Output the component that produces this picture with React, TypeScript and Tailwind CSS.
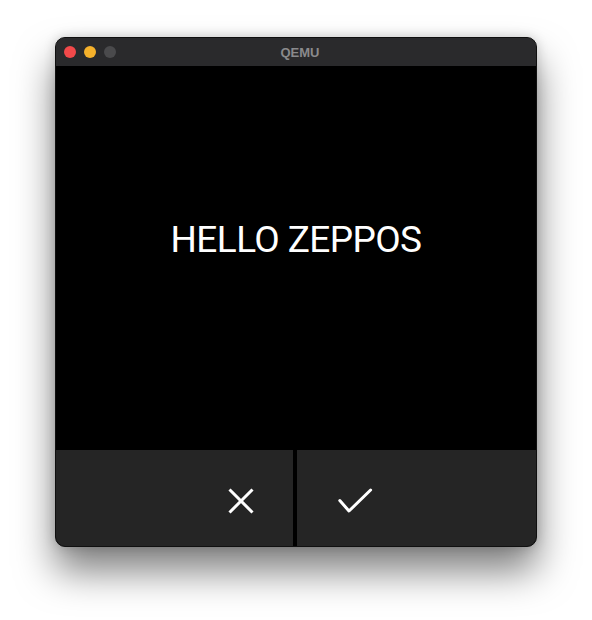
import React from "react";

export default function App() {
  return (
    <div className="w-[592px] h-[620px] bg-white pt-[37px] pl-[55px]" style={{ fontFamily: "Roboto, 'Liberation Sans', sans-serif" }}>
      <div className="w-[482px] rounded-[10px] overflow-hidden border border-[#101010] bg-[#2a2a2c] shadow-[0_24px_38px_rgba(0,0,0,0.5),0_0_12px_rgba(0,0,0,0.18)]">
        {/* Title bar */}
        <div className="h-[28px] flex items-center bg-[#2a2a2c]">
          <div className="flex-1 flex items-center gap-[8px] pl-[8px]">
            <span className="w-[12px] h-[12px] rounded-full bg-[#f2494a]" />
            <span className="w-[12px] h-[12px] rounded-full bg-[#f5b12b]" />
            <span className="w-[12px] h-[12px] rounded-full bg-[#4a4a4c]" />
          </div>
          <div
            className="text-[13px] font-bold text-[#8a8a8c] leading-none"
            style={{ fontFamily: "'Liberation Sans', Arial, sans-serif" }}
          >
            QEMU
          </div>
          <div className="flex-1" />
        </div>
        {/* Display */}
        <div className="w-[480px] flex flex-col">
          <div className="h-[384px] bg-black flex flex-col items-center pt-[155px]">
            <div className="text-[37px] leading-[37px] tracking-[-0.6px] text-white" style={{ fontFamily: "Roboto, sans-serif" }}>
              HELLO ZEPPOS
            </div>
          </div>
          <div className="h-[96px] flex bg-black">
            <div className="flex-1 bg-[#252525] flex items-center justify-end pr-[38px] pt-[6px]">
              <svg width="28" height="28" viewBox="0 0 28 28" fill="none">
                <path d="M2.5 2.5 L25.5 25.5 M25.5 2.5 L2.5 25.5" stroke="white" strokeWidth="3" strokeLinecap="butt" />
              </svg>
            </div>
            <div className="w-[4px] bg-black" />
            <div className="flex-1 bg-[#252525] flex items-center justify-start pl-[40px] pt-[6px]">
              <svg width="36" height="28" viewBox="0 0 36 28" fill="none">
                <path d="M2.8 13.6 L12 24 L33.6 3" stroke="white" strokeWidth="3" strokeLinecap="round" strokeLinejoin="round" />
              </svg>
            </div>
          </div>
        </div>
      </div>
    </div>
  );
}
